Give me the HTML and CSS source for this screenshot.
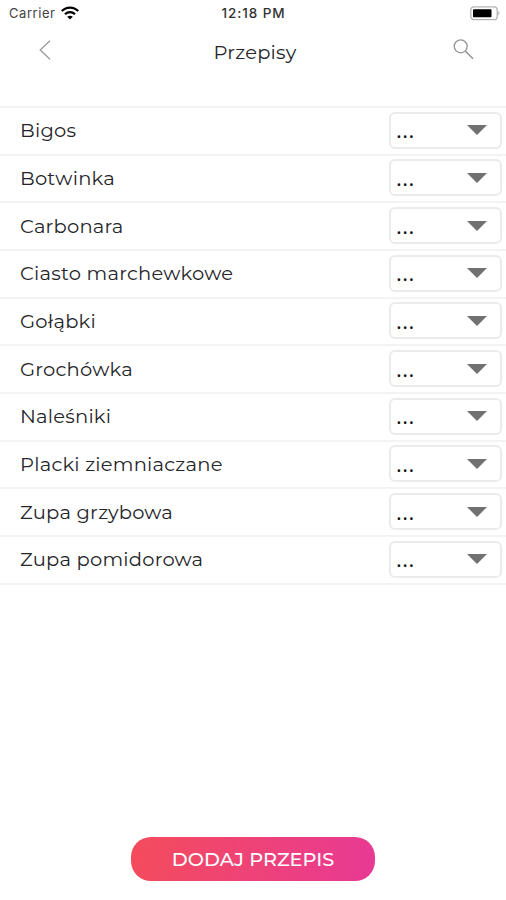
FILE: index.html
```html
<!DOCTYPE html>
<html lang="pl">
<head>
<meta charset="utf-8">
<title>Przepisy</title>
<link rel="stylesheet" href="styles.css">
</head>
<body>
<div class="status">
  <div class="carrier"><span>Carrier</span>
    <svg class="wifi" width="18" height="14" viewBox="0 0 18 14"><g fill="none" stroke="#000" stroke-width="2.2"><path d="M.8 5.1C5.4.4 12.6.4 17.200 5.100"/><path d="M4 8.300C6.900 5.400 11.100 5.400 14 8.300"/></g><path d="M9 13.600L6.200 10.800Q9 8.600 11.800 10.800Z"/></svg>
  </div>
  <div class="time">12:18 PM</div>
  <svg class="battery" width="30" height="15" viewBox="0 0 30 15"><rect x=".8" y=".8" width="26.400" height="12.900" rx="3" fill="#fff" stroke="#b5b5b5" stroke-width="1.300"/><path d="M28.300 5Q30.500 7.200 28.300 9.500Z" fill="#aaa"/><rect x="3" y="3.300" width="18.500" height="8" rx=".8"/></svg>
</div>
<header class="header">
  <svg class="back" width="12" height="20" viewBox="0 0 12 20"><path d="M11 .7L1.200 10L11 19.300" fill="none" stroke="#9a9a9a" stroke-width="1.300"/></svg>
  <h1>Przepisy</h1>
  <svg class="search" width="21" height="21" viewBox="0 0 21 21"><g fill="none" stroke="#959595" stroke-width="1.300"><circle cx="7.700" cy="7.300" r="6.500"/><path d="M12.300 12L20 19.800" stroke-width="1.600"/></g></svg>
</header>
<ul class="list">
  <li><span class="name">Bigos</span><div class="select"><span>...</span><i></i></div></li>
  <li><span class="name">Botwinka</span><div class="select"><span>...</span><i></i></div></li>
  <li><span class="name">Carbonara</span><div class="select"><span>...</span><i></i></div></li>
  <li><span class="name">Ciasto marchewkowe</span><div class="select"><span>...</span><i></i></div></li>
  <li><span class="name">Gołąbki</span><div class="select"><span>...</span><i></i></div></li>
  <li><span class="name">Grochówka</span><div class="select"><span>...</span><i></i></div></li>
  <li><span class="name">Naleśniki</span><div class="select"><span>...</span><i></i></div></li>
  <li><span class="name">Placki ziemniaczane</span><div class="select"><span>...</span><i></i></div></li>
  <li><span class="name">Zupa grzybowa</span><div class="select"><span>...</span><i></i></div></li>
  <li><span class="name">Zupa pomidorowa</span><div class="select"><span>...</span><i></i></div></li>
</ul>
<footer class="footer"><button class="add">DODAJ PRZEPIS</button></footer>
</body>
</html>
```
FILE: styles.css
```css
* { box-sizing: border-box; }
body {
  margin: 0;
  height: 900px;
  display: flex;
  flex-direction: column;
  background: #fff;
  color: #25252a;
  font-family: Montserrat, sans-serif;
  overflow: hidden;
}
.status {
  height: 27px;
  padding: 0 6px 0 9px;
  display: grid;
  grid-template-columns: 1fr auto 1fr;
  align-items: center;
  font-family: Inter, sans-serif;
  font-size: 13px;
  line-height: 27px;
  color: #444;
}
.carrier { display: flex; align-items: center; gap: 6px; letter-spacing: .55px; }
.wifi { margin-bottom: 2px; }
.time { margin-right: 2px; font-size: 13.5px; font-weight: 500; letter-spacing: .9px; color: #333; }
.battery { justify-self: end; }
.header {
  height: 79px;
  padding: 0 32px 0 39px;
  display: flex;
  justify-content: space-between;
  align-items: flex-start;
}
.header h1 {
  margin: 11px 0 0 6px;
  font-size: 19.500px;
  line-height: 28px;
  font-weight: 400;
  letter-spacing: .2px;
}
.back { margin-top: 13px; }
.search { margin-top: 12px; }
.list {
  margin: 0;
  padding: 0;
  list-style: none;
  border-top: 2px solid #f3f3f3;
}
.list li {
  height: 47.67px;
  padding: 0 4px 1px 20px;
  display: flex;
  justify-content: space-between;
  align-items: center;
  border-bottom: 2px solid #f3f3f3;
}
.name { font-size: 19.500px; line-height: 28px; letter-spacing: .22px; white-space: nowrap; }
.select {
  width: 113px;
  height: 37px;
  padding: 0 13px 0 5px;
  display: flex;
  justify-content: space-between;
  align-items: center;
  border: 2px solid #ebebeb;
  border-radius: 6px;
}
.select span { padding-bottom: 2px; font-family: "Open Sans", sans-serif; font-size: 22px; line-height: 24px; letter-spacing: .5px; color: #111; }
.select i {
  border-left: 10px solid transparent;
  border-right: 10px solid transparent;
  border-top: 10px solid #717171;
}
.footer { margin-top: auto; padding-bottom: 19px; display: flex; justify-content: center; }
.add {
  width: 244px;
  height: 44px;
  padding: 0;
  border: 0;
  border-radius: 20px;
  background: linear-gradient(100deg, #f44c5b, #e83995);
  color: #fff;
  font: 500 19.300px/44px Montserrat, sans-serif;
}
```
